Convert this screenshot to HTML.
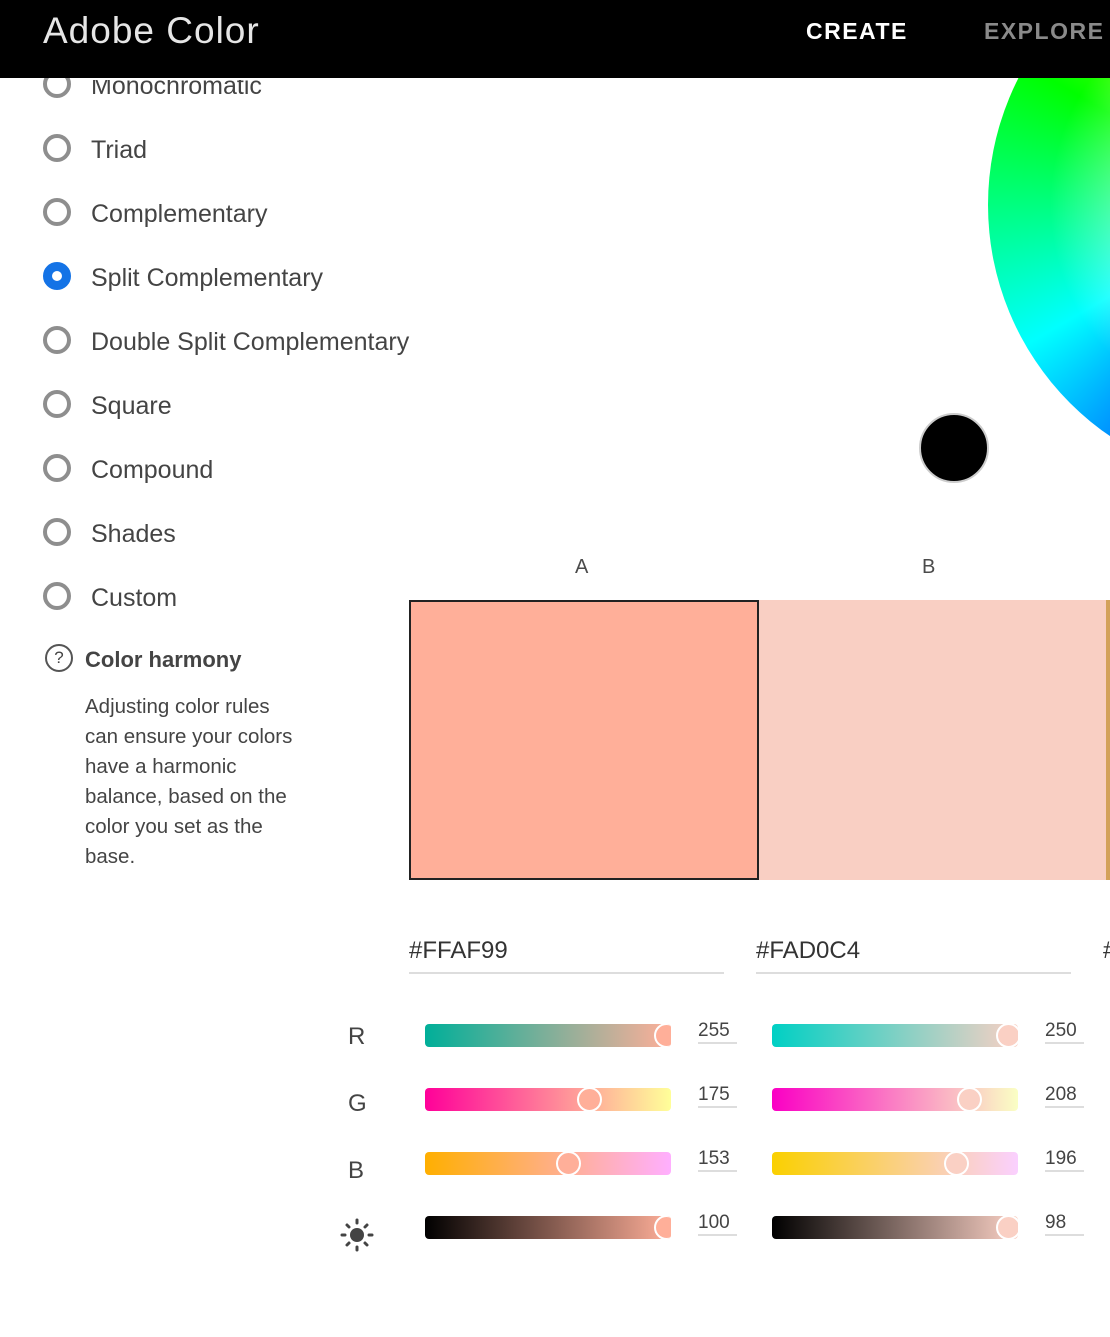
<!DOCTYPE html>
<html><head><meta charset="utf-8"><style>
*{margin:0;padding:0;box-sizing:border-box}
body{width:1110px;height:1337px;overflow:hidden;background:#fff;font-family:"Liberation Sans",sans-serif;color:#4b4b4b;position:relative}
.a{position:absolute}
.hdr{left:0;top:0;width:1110px;height:78px;background:#000}
.logo{left:43px;top:10px;font-size:37px;color:#e6e6e6;letter-spacing:1px;font-weight:300}
.nav{top:18px;font-size:23px;font-weight:bold;letter-spacing:1.5px}
.radio{width:28px;height:28px;border-radius:50%;border:4px solid #8e8e8e;left:43px}
.lbl{left:91px;font-size:25px;color:#444;top:2px}
.wheel{left:988px;top:-75px;width:560px;height:560px;border-radius:50%;background:radial-gradient(circle,#fff 0%,rgba(255,255,255,0) 55%),conic-gradient(from 60deg,#ff0000,#ff00ff 60deg,#0000ff 120deg,#00ffff 180deg,#00ff00 240deg,#ffff00 300deg,#ff0000 360deg)}
.track{height:23px;border-radius:4px;overflow:hidden;width:246px}
.th{position:absolute;top:-1px;width:25px;height:25px;border-radius:50%;border:2px solid #fff}
.val{font-size:19px;color:#444;width:39px;border-bottom:2px solid #ddd;height:24px}
.rl{left:348px;font-size:24px;color:#444}
</style></head><body>
<div class="a wheel"></div>
<div class="a hdr"></div>
<div class="a logo">Adobe Color</div>
<div class="a nav" style="left:806px;color:#fff">CREATE</div>
<div class="a nav" style="left:984px;color:#8a8a8a">EXPLORE</div>

<div class="a radio" style="top:70px;clip-path:inset(8px 0 0 0)"></div>
<div class="a lbl" style="top:72px;clip-path:inset(8px 0 0 0)">Monochromatic</div>
<div class="a radio" style="top:134px"></div><div class="a lbl" style="top:136px">Triad</div>
<div class="a radio" style="top:198px"></div><div class="a lbl" style="top:200px">Complementary</div>
<div class="a radio" style="top:262px;border:9px solid #1473e6;background:#fff"></div><div class="a lbl" style="top:264px">Split Complementary</div>
<div class="a radio" style="top:326px"></div><div class="a lbl" style="top:328px">Double Split Complementary</div>
<div class="a radio" style="top:390px"></div><div class="a lbl" style="top:392px">Square</div>
<div class="a radio" style="top:454px"></div><div class="a lbl" style="top:456px">Compound</div>
<div class="a radio" style="top:518px"></div><div class="a lbl" style="top:520px">Shades</div>
<div class="a radio" style="top:582px"></div><div class="a lbl" style="top:584px">Custom</div>

<div class="a" style="left:45px;top:644px;width:28px;height:28px;border:2px solid #555;border-radius:50%;font-size:17px;text-align:center;line-height:24px;color:#444">?</div>
<div class="a" style="left:85px;top:647px;font-size:22px;font-weight:bold;color:#444">Color harmony</div>
<div class="a" style="left:85px;top:692px;font-size:20.5px;line-height:30px;color:#444;white-space:nowrap">Adjusting color rules<br>can ensure your colors<br>have a harmonic<br>balance, based on the<br>color you set as the<br>base.</div>

<div class="a" style="left:919px;top:413px;width:70px;height:70px;border-radius:50%;background:#000;border:2px solid #ccc"></div>

<div class="a" style="left:575px;top:556px;font-size:20px">A</div>
<div class="a" style="left:922px;top:556px;font-size:20px">B</div>
<div class="a" style="left:409px;top:600px;width:350px;height:280px;background:#ffaf99;border:2px solid #222"></div>
<div class="a" style="left:759px;top:600px;width:348px;height:280px;background:#f9cfc3"></div>
<div class="a" style="left:1106px;top:600px;width:4px;height:280px;background:#d3a15a"></div>

<div class="a" style="left:409px;top:937px;width:315px;height:37px;border-bottom:2px solid #ddd;font-size:24px;color:#333">#FFAF99</div>
<div class="a" style="left:756px;top:937px;width:315px;height:37px;border-bottom:2px solid #ddd;font-size:24px;color:#333">#FAD0C4</div>
<div class="a" style="left:1103px;top:937px;font-size:24px;color:#333">#</div>

<div class="a rl" style="top:1023px">R</div>
<div class="a rl" style="top:1090px">G</div>
<div class="a rl" style="top:1157px">B</div>
<svg class="a" style="left:340px;top:1218px" width="34" height="34" viewBox="0 0 34 34"><circle cx="17" cy="17" r="7" fill="#444"/><g stroke="#444" stroke-width="3" stroke-linecap="round"><line x1="17" y1="2" x2="17" y2="5"/><line x1="17" y1="29" x2="17" y2="32"/><line x1="2" y1="17" x2="5" y2="17"/><line x1="29" y1="17" x2="32" y2="17"/><line x1="7" y1="7" x2="9" y2="9"/><line x1="25" y1="25" x2="27" y2="27"/><line x1="7" y1="27" x2="9" y2="25"/><line x1="25" y1="9" x2="27" y2="7"/></g></svg>

<div class="a track" style="left:425px;top:1024px;background:linear-gradient(90deg,#00af99,#ffaf99)"><div class="th" style="left:229px;background:#ffaf99"></div></div>
<div class="a track" style="left:425px;top:1088px;background:linear-gradient(90deg,#ff0099,#ffff99)"><div class="th" style="left:152px;background:#ffaf99"></div></div>
<div class="a track" style="left:425px;top:1152px;background:linear-gradient(90deg,#ffaf00,#ffafff)"><div class="th" style="left:131px;background:#ffaf99"></div></div>
<div class="a track" style="left:425px;top:1216px;background:linear-gradient(90deg,#000,#ffaf99)"><div class="th" style="left:229px;background:#ffaf99"></div></div>
<div class="a val" style="left:698px;top:1020px">255</div>
<div class="a val" style="left:698px;top:1084px">175</div>
<div class="a val" style="left:698px;top:1148px">153</div>
<div class="a val" style="left:698px;top:1212px">100</div>

<div class="a track" style="left:772px;top:1024px;background:linear-gradient(90deg,#00d0c4,#fad0c4)"><div class="th" style="left:224px;background:#fad0c4"></div></div>
<div class="a track" style="left:772px;top:1088px;background:linear-gradient(90deg,#fa00c4,#faffc4)"><div class="th" style="left:185px;background:#fad0c4"></div></div>
<div class="a track" style="left:772px;top:1152px;background:linear-gradient(90deg,#fad000,#fad0ff)"><div class="th" style="left:172px;background:#fad0c4"></div></div>
<div class="a track" style="left:772px;top:1216px;background:linear-gradient(90deg,#000,#fad0c4)"><div class="th" style="left:224px;background:#fad0c4"></div></div>
<div class="a val" style="left:1045px;top:1020px">250</div>
<div class="a val" style="left:1045px;top:1084px">208</div>
<div class="a val" style="left:1045px;top:1148px">196</div>
<div class="a val" style="left:1045px;top:1212px">98</div>
</body></html>
